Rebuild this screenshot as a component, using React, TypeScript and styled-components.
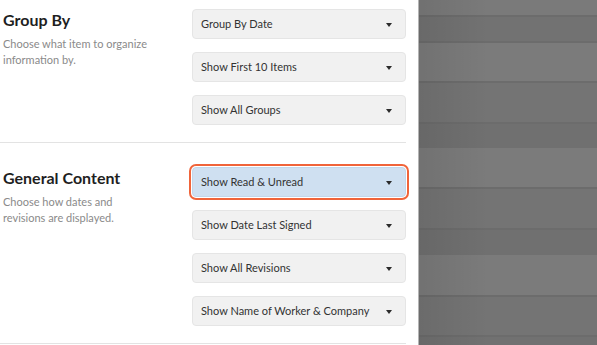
import React from "react";
import styled, { createGlobalStyle } from "styled-components";

const Global = createGlobalStyle`
  html, body { margin: 0; padding: 0; background: #fff; }
  body { font-family: Lato, "Noto Sans", sans-serif; overflow: hidden; }
  * { box-sizing: border-box; }
`;

const Page = styled.div`
  display: flex;
  width: 597px;
  height: 345px;
  overflow: hidden;
`;

const Panel = styled.div`
  width: 419px;
  flex: none;
  background: #fff;
  border-right: 1px solid #b4b4b4;
  padding: 0 12px 0 3px;
  display: flex;
  flex-direction: column;
`;

const Section = styled.section<{ $top: number }>`
  display: grid;
  grid-template-columns: 189px 214px;
  padding: ${(p) => p.$top}px 0 17px 0;
  border-bottom: 1px solid #e3e3e3;
  margin-left: -3px;
  padding-left: 3px;
`;

const Info = styled.div`
  display: flex;
  flex-direction: column;
`;

const Title = styled.h2`
  margin: 0;
  font-size: 16px;
  line-height: 22px;
  font-weight: 700;
  color: #1f1f1f;
`;

const Desc = styled.p`
  margin: 5px 0 0 0;
  width: 150px;
  font-size: 11px;
  line-height: 16px;
  color: #8a8a8a;
`;

const Controls = styled.div`
  display: flex;
  flex-direction: column;
  gap: 13px;
`;

const Select = styled.div<{ $focused?: boolean }>`
  height: 30px;
  display: flex;
  align-items: center;
  justify-content: space-between;
  padding: 0 13px 2px 8px;
  border-radius: 4px;
  border: 1px solid ${(p) => (p.$focused ? "#c3d6ea" : "#e5e5e5")};
  background: ${(p) => (p.$focused ? "#cfe0f1" : "#f1f1f1")};
  box-shadow: ${(p) =>
    p.$focused ? "0 0 0 1px #fff, 0 0 0 3px #f0643a" : "none"};
  font-size: 11px;
  color: #333;
`;

const Caret = styled.span`
  width: 0;
  height: 0;
  border-left: 3.5px solid transparent;
  border-right: 3.5px solid transparent;
  border-top: 4px solid #2b2b2b;
  margin-top: 4px;
`;

const Overlay = styled.div`
  position: relative;
  flex: 1;
  display: flex;
  flex-direction: column;
  &::after {
    content: "";
    position: absolute;
    inset: 0;
    background: linear-gradient(to right, rgba(0, 0, 0, 0.08), rgba(0, 0, 0, 0) 70px);
    pointer-events: none;
  }
`;

const Stripe = styled.div<{ $tone: string; $line?: boolean }>`
  flex: none;
  background: ${(p) => p.$tone};
  border-top: ${(p) => (p.$line ? "2px solid #6c6c6c" : "none")};
`;

const stripes: { h: number; tone: string; line?: boolean }[] = [
  { h: 15, tone: "#7a7a7a" },
  { h: 26, tone: "#727272", line: true },
  { h: 40, tone: "#7b7b7b", line: true },
  { h: 41, tone: "#747474", line: true },
  { h: 26, tone: "#707070", line: true },
  { h: 39, tone: "#7b7b7b" },
  { h: 41, tone: "#747474", line: true },
  { h: 27, tone: "#707070", line: true },
  { h: 40, tone: "#7b7b7b" },
  { h: 40, tone: "#747474", line: true },
  { h: 10, tone: "#717171", line: true },
];

const SelectBox = ({ label, focused }: { label: string; focused?: boolean }) => (
  <Select $focused={focused}>
    <span>{label}</span>
    <Caret />
  </Select>
);

export default function App() {
  return (
    <Page>
      <Global />
      <Panel>
        <Section $top={9}>
          <Info>
            <Title>Group By</Title>
            <Desc>Choose what item to organize information by.</Desc>
          </Info>
          <Controls>
            <SelectBox label="Group By Date" />
            <SelectBox label="Show First 10 Items" />
            <SelectBox label="Show All Groups" />
          </Controls>
        </Section>
        <Section $top={24}>
          <Info>
            <Title>General Content</Title>
            <Desc>Choose how dates and revisions are displayed.</Desc>
          </Info>
          <Controls>
            <SelectBox label="Show Read &amp; Unread" focused />
            <SelectBox label="Show Date Last Signed" />
            <SelectBox label="Show All Revisions" />
            <SelectBox label="Show Name of Worker &amp; Company" />
          </Controls>
        </Section>
      </Panel>
      <Overlay>
        {stripes.map((s, i) => (
          <Stripe key={i} $tone={s.tone} $line={s.line} style={{ height: s.h }} />
        ))}
      </Overlay>
    </Page>
  );
}
